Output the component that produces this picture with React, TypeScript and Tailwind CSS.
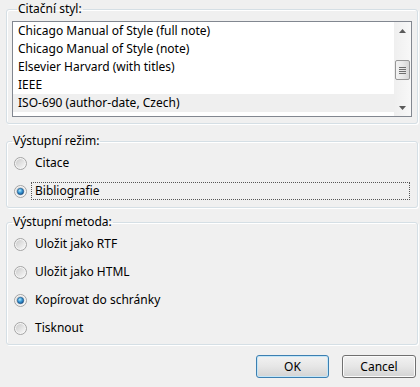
import React from "react";

const styles = [
    "Chicago Manual of Style (full note)",
    "Chicago Manual of Style (note)",
    "Elsevier Harvard (with titles)",
    "IEEE",
    "ISO-690 (author-date, Czech)",
];

function Radio({ checked }: { checked?: boolean }) {
    return (
        <svg width="13" height="13" viewBox="0 0 13 13" className="shrink-0">
            <defs>
                <linearGradient id="radioFill" x1="0" y1="0" x2="1" y2="1">
                    <stop offset="0" stopColor="#cbcbcb" />
                    <stop offset="1" stopColor="#f9f9f9" />
                </linearGradient>
                <radialGradient id="radioDot" cx="0.4" cy="0.35" r="0.75">
                    <stop offset="0" stopColor="#b4ecfd" />
                    <stop offset="0.45" stopColor="#3a9ad8" />
                    <stop offset="1" stopColor="#0f4680" />
                </radialGradient>
            </defs>
            <circle cx="6.5" cy="6.5" r="6" fill="#f6f6f6" stroke="#a3a3a3" />
            <circle cx="6.5" cy="6.5" r="4.6" fill="url(#radioFill)" />
            {checked && <circle cx="6.5" cy="6.5" r="3.2" fill="url(#radioDot)" stroke="#1d4f80" strokeWidth="0.6" />}
        </svg>
    )
}

function Option({ label, checked, focused }: { label: string, checked?: boolean, focused?: boolean }) {
    return (
        <div className="flex items-center h-[28px] pl-[7px]">
            <Radio checked={checked} />
            <span className={`ml-[4px] mr-[7px] px-[3px] h-[18px] leading-[16px] border ${focused ? "flex-1 border-dotted border-[#555]" : "border-transparent"}`}>
                {label}
            </span>
        </div>
    )
}

function Group({ title, children, className = "" }: { title: string, children: React.ReactNode, className?: string }) {
    return (
        <fieldset className={`border border-[#d5dfe5] rounded-[3px] shadow-[inset_1px_1px_0_#fff,1px_1px_0_#fff] ${className}`}>
            <legend className="ml-[5px] px-[1px] leading-[16px]">{title}</legend>
            {children}
        </fieldset>
    )
}

export default function App() {
    return (
        <div className="w-[420px] h-[387px] bg-[#f0f0f0] pt-px pl-[6px] pr-[2px] text-[12px] text-black overflow-hidden" style={{ fontFamily: '"Noto Sans", "Open Sans", sans-serif' }}>
            <Group title="Citační styl:" className="px-[5px] pt-[4px] pb-[6px]">
                <div className="flex h-[96px] border border-[#828790] bg-white">
                    <div className="flex-1 flex flex-col">
                        {styles.map((s, i) => (
                            <div key={s} className={`h-[18px] leading-[18px] pl-[5px] ${i === 4 ? "bg-[#efefef]" : ""}`}>{s}</div>
                        ))}
                    </div>
                    <div className="w-[17px] flex flex-col items-center bg-gradient-to-r from-[#efefef] to-[#f8f8f8]">
                        <div className="h-[17px] w-full flex items-center justify-center">
                            <svg width="7" height="4" viewBox="0 0 7 4"><path d="M3.5 0 L7 4 L0 4 Z" fill="#5a5a5a" /></svg>
                        </div>
                        <div className="flex-1 w-full px-px pt-[21px]">
                            <div className="h-[20px] w-full rounded-[2px] border border-[#979797] bg-gradient-to-r from-[#f3f3f3] via-[#e8e8e8] to-[#d6d6d6] flex flex-col items-center justify-center gap-[1px]">
                                <div className="w-[7px] h-px bg-[#6e6e6e]" />
                                <div className="w-[7px] h-px bg-[#6e6e6e]" />
                                <div className="w-[7px] h-px bg-[#6e6e6e]" />
                                <div className="w-[7px] h-px bg-[#6e6e6e]" />
                            </div>
                        </div>
                        <div className="h-[17px] w-full flex items-center justify-center">
                            <svg width="7" height="4" viewBox="0 0 7 4"><path d="M0 0 L7 0 L3.5 4 Z" fill="#5a5a5a" /></svg>
                        </div>
                    </div>
                </div>
            </Group>

            <Group title="Výstupní režim:" className="mt-[9px] pb-[2px]">
                <Option label="Citace" />
                <Option label="Bibliografie" checked focused />
            </Group>

            <Group title="Výstupní metoda:" className="mt-[6px] pb-[2px]">
                <Option label="Uložit jako RTF" />
                <Option label="Uložit jako HTML" />
                <Option label="Kopírovat do schránky" checked />
                <Option label="Tisknout" />
            </Group>

            <div className="flex justify-end gap-[13px] pr-[2px] mt-[10px]">
                <button className="w-[73px] h-[23px] rounded-[3px] border border-[#3c7fb1] bg-gradient-to-b from-[#f2f2f2] via-[#e6e6e6] to-[#d3d3d3] shadow-[inset_0_0_0_1px_#c3e6f8]">OK</button>
                <button className="w-[74px] h-[23px] rounded-[3px] border border-[#707070] bg-gradient-to-b from-[#f2f2f2] via-[#e6e6e6] to-[#d3d3d3] shadow-[inset_0_0_0_1px_#fbfbfb]">Cancel</button>
            </div>
        </div>
    )
}
